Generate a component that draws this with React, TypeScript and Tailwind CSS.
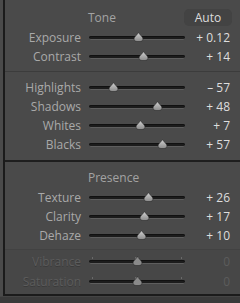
import React from "react";

type Row = { label: string; value: string; pos: number; dim?: boolean };

const Thumb = ({ dim }: { dim?: boolean }) => (
  <svg width="11" height="10" viewBox="0 0 11 10">
    <defs>
      <linearGradient id="tg" x1="0" y1="0" x2="0" y2="1">
        <stop offset="0" stopColor="#d2d2d2" />
        <stop offset="1" stopColor="#8a8a8a" />
      </linearGradient>
    </defs>
    <path
      d="M5.5 0.5 C6.5 2.5 10 5 10 7 C10 8.6 8.6 9.5 7 9.5 L4 9.5 C2.4 9.5 1 8.6 1 7 C1 5 4.5 2.5 5.5 0.5 Z"
      fill={dim ? "#8a8a8a" : "url(#tg)"}
      stroke="#2a2a2a"
      strokeWidth="0.6"
    />
  </svg>
);

const Slider = ({ pos, dim }: { pos: number; dim?: boolean }) => (
  <div className="relative w-[96px] h-[19px] shrink-0">
    <div className="absolute left-0 right-0 top-[8px] h-[4px] rounded-full bg-[#1c1c1c] border-b border-[#5e5e5e] shadow-[inset_0_1px_0_#111]" />
    {dim && (
      <>
        <div className="absolute left-[3px] top-[5px] w-[1px] h-[2px] bg-[#6a6a6a]" />
        <div className="absolute right-[3px] top-[5px] w-[1px] h-[2px] bg-[#6a6a6a]" />
        <div className="absolute left-[46px] top-[5px] w-[4px] h-[2px] bg-[#6a6a6a]" />
      </>
    )}
    <div className="absolute top-[4px] w-[11px] h-[10px]" style={{ left: pos - 89 - 5.5 }}>
      <Thumb dim={dim} />
    </div>
  </div>
);

const SliderRow = ({ label, value, pos, dim }: Row) => (
  <div className="flex items-center h-[19px]">
    <div
      className={`w-[76px] text-right shrink-0 ${dim ? "text-[#5c5c5c] [text-shadow:0_1px_0_#3a3a3a]" : "text-[#a9a9a9]"}`}
    >
      {label}
    </div>
    <div className="w-[8px] shrink-0" />
    <Slider pos={pos} dim={dim} />
    <div className={`flex-1 text-right pr-[10px] ${dim ? "text-[#5c5c5c]" : "text-[#dedede]"}`}>{value}</div>
  </div>
);

export default function App() {
  return (
    <div
      className="w-[240px] h-[303px] bg-[#3a3a3a] flex flex-col overflow-hidden text-[12px] leading-none"
      style={{ fontFamily: '"Open Sans", "DejaVu Sans", sans-serif' }}
    >
      <div className="h-[296px] pl-[3px] bg-[#4a4a4a] flex">
        <div className="flex-1 border-l-2 border-b-2 border-[#1b1b1b] flex flex-col">
          {/* Tone */}
          <div className="h-[71px] pt-[7px] flex flex-col">
            <div className="flex items-center h-[21px]">
              <div className="w-[83px]" />
              <div className="text-[#a3a3a3]">Tone</div>
              <div className="flex-1" />
              <div className="w-[48px] h-[17px] mr-[8px] rounded-[5px] bg-[#434343] text-[#dcdcdc] flex items-center justify-center">
                Auto
              </div>
            </div>
            <SliderRow label="Exposure" value="+ 0.12" pos={138} />
            <SliderRow label="Contrast" value="+ 14" pos={143} />
          </div>
          <div className="h-[1px] bg-[#3c3c3c]" />
          <div className="h-[88px] pt-[6px] flex flex-col">
            <SliderRow label="Highlights" value="– 57" pos={113} />
            <SliderRow label="Shadows" value="+ 48" pos={157} />
            <SliderRow label="Whites" value="+ 7" pos={140} />
            <SliderRow label="Blacks" value="+ 57" pos={162} />
          </div>
          <div className="h-[2px] bg-[#1e1e1e]" />
          {/* Presence */}
          <div className="h-[87px] pt-[6px] flex flex-col">
            <div className="flex items-center h-[20px]">
              <div className="w-[83px]" />
              <div className="text-[#a3a3a3]">Presence</div>
            </div>
            <SliderRow label="Texture" value="+ 26" pos={148} />
            <SliderRow label="Clarity" value="+ 17" pos={144} />
            <SliderRow label="Dehaze" value="+ 10" pos={141} />
          </div>
          <div className="h-[1px] bg-[#424242]" />
          <div className="flex-1 pt-[2px] flex flex-col bg-[#474747]">
            <SliderRow label="Vibrance" value="0" pos={137} dim />
            <div className="h-[1px]" />
            <SliderRow label="Saturation" value="0" pos={137} dim />
          </div>
        </div>
      </div>
      <div className="h-[1px] bg-[#444]" />
    </div>
  );
}
